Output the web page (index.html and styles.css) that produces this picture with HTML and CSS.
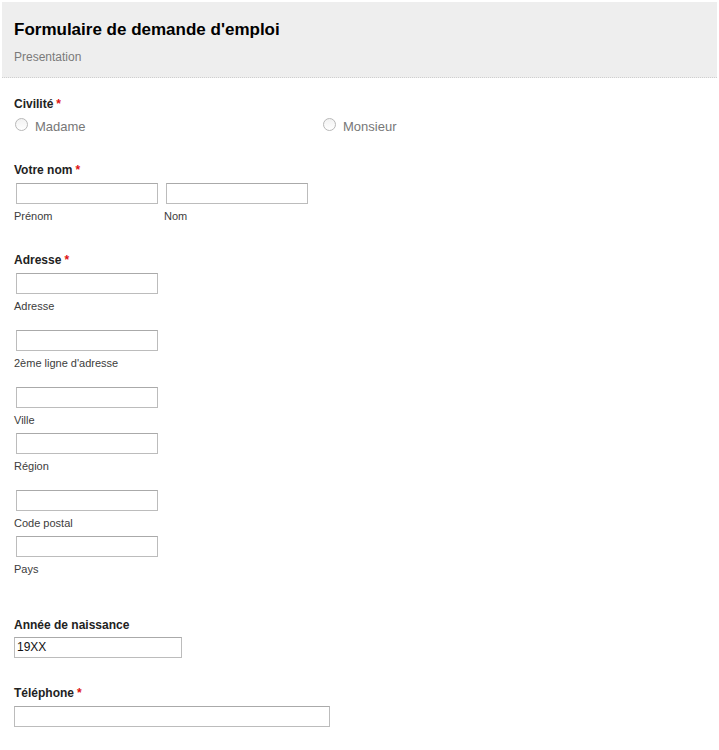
FILE: index.html
```html
<!DOCTYPE html>
<html lang="fr">
<head>
<meta charset="utf-8">
<title>Formulaire de demande d'emploi</title>
<link rel="stylesheet" href="styles.css">
</head>
<body>
<div class="page">
  <header class="form-header">
    <h1 class="form-title">Formulaire de demande d'emploi</h1>
    <div class="form-desc">Presentation</div>
  </header>

  <form class="form-body">
    <div class="field field-civilite">
      <div class="label">Civilité<span class="req">*</span></div>
      <div class="radios">
        <label class="radio"><span class="circle"></span><span class="radio-text">Madame</span></label>
        <label class="radio"><span class="circle"></span><span class="radio-text">Monsieur</span></label>
      </div>
    </div>

    <div class="field field-nom">
      <div class="label">Votre nom<span class="req">*</span></div>
      <div class="pair">
        <div class="sub">
          <div class="input small"></div>
          <div class="sublabel">Prénom</div>
        </div>
        <div class="sub">
          <div class="input small"></div>
          <div class="sublabel">Nom</div>
        </div>
      </div>
    </div>

    <div class="field field-adresse">
      <div class="label">Adresse<span class="req">*</span></div>
      <div class="addr-row first">
        <div class="sub">
          <div class="input small"></div>
          <div class="sublabel">Adresse</div>
        </div>
      </div>
      <div class="addr-row">
        <div class="sub">
          <div class="input small"></div>
          <div class="sublabel">2ème ligne d'adresse</div>
        </div>
      </div>
      <div class="addr-row">
        <div class="sub">
          <div class="input small"></div>
          <div class="sublabel">Ville</div>
        </div>
        <div class="sub stacked">
          <div class="input small"></div>
          <div class="sublabel">Région</div>
        </div>
      </div>
      <div class="addr-row">
        <div class="sub">
          <div class="input small"></div>
          <div class="sublabel">Code postal</div>
        </div>
        <div class="sub stacked">
          <div class="input small"></div>
          <div class="sublabel">Pays</div>
        </div>
      </div>
    </div>

    <div class="field field-annee">
      <div class="label">Année de naissance</div>
      <div class="input medium"><span class="value">19XX</span></div>
    </div>

    <div class="field field-tel">
      <div class="label">Téléphone<span class="req">*</span></div>
      <div class="input large"></div>
    </div>
  </form>
</div>
</body>
</html>
```

FILE: styles.css
```css
* { box-sizing: border-box; }

html, body {
  margin: 0;
  padding: 0;
  background: #ffffff;
}

body {
  font-family: "Liberation Sans", Arial, sans-serif;
  color: #222;
}

.page {
  padding: 2px;
}

.form-header {
  background: #eeeeee;
  padding: 18px 12px 12px;
  border-bottom: 1px dotted #cfcfcf;
}

.form-title {
  margin: 0;
  font-size: 17px;
  line-height: 20px;
  font-weight: bold;
  color: #000;
}

.form-desc {
  margin-top: 9px;
  font-size: 12px;
  line-height: 16px;
  color: #7a7a7a;
}

.form-body {
  padding-left: 12px;
}

.label {
  font-size: 12px;
  line-height: 15px;
  font-weight: bold;
  color: #222;
}

.req {
  color: #dd1111;
  font-weight: bold;
  margin-left: 3px;
}

.field-civilite { margin-top: 19px; }

.radios {
  display: grid;
  grid-template-columns: 308px 308px;
  margin-top: 7px;
}

.radio {
  display: flex;
  align-items: flex-start;
  padding-left: 1px;
  height: 16px;
}

.circle {
  width: 13px;
  height: 13px;
  margin-top: -1px;
  border: 1px solid #b8b8b8;
  border-radius: 50%;
  background: linear-gradient(#f2f2f2, #ffffff);
  flex: none;
}

.radio-text {
  margin-left: 7px;
  font-size: 13px;
  line-height: 16px;
  color: #777;
}

.field-nom { margin-top: 28px; }
.field-adresse { margin-top: 30px; }
.field-annee { margin-top: 42px; }
.field-tel { margin-top: 28px; }

.pair {
  display: flex;
  margin-top: 5px;
}

.sub {
  width: 150px;
}

.input {
  height: 21px;
  border: 1px solid #bcbcbc;
  border-top-color: #aaaaaa;
  background: #fff;
}

.input.small {
  width: 142px;
  margin-left: 2px;
}

.input.medium {
  width: 168px;
  margin-top: 4px;
  font-size: 12px;
  line-height: 19px;
  padding-left: 2px;
  color: #111;
}

.input.large {
  width: 316px;
  margin-top: 5px;
}

.sublabel {
  margin-top: 5px;
  font-size: 11px;
  line-height: 14px;
  color: #3c3c3c;
}

.addr-row { margin-top: 17px; }
.addr-row.first { margin-top: 5px; }
.sub.stacked { margin-top: 6px; }
```
